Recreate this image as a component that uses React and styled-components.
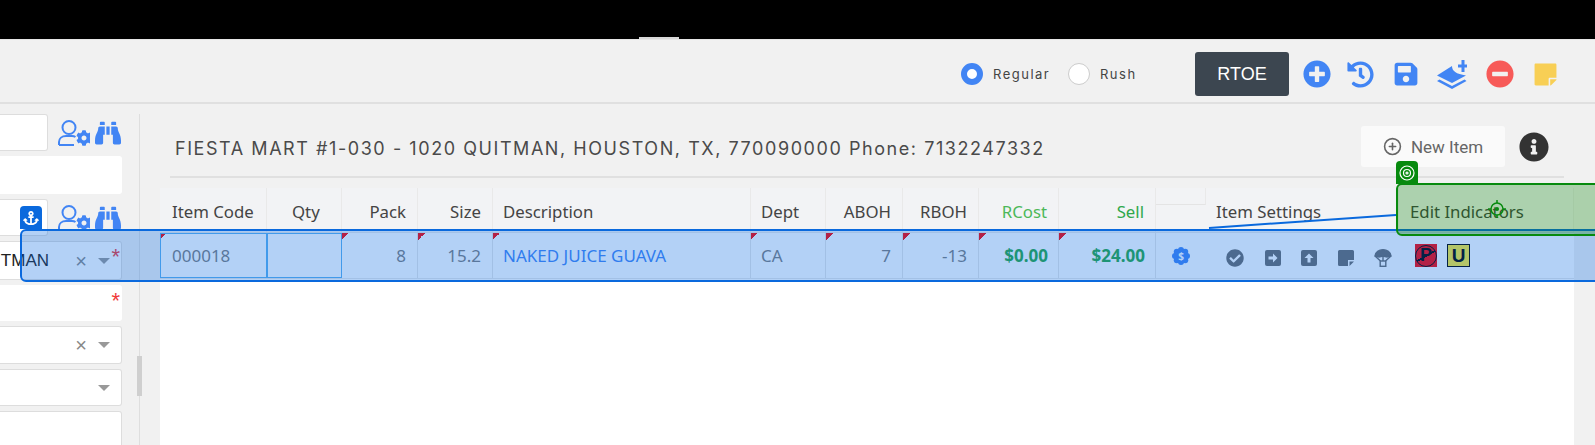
import React from "react";
import styled, { createGlobalStyle } from "styled-components";
import {
  FaPlusCircle,
  FaHistory,
  FaSave,
  FaMinusCircle,
  FaStickyNote,
  FaBinoculars,
  FaAnchor,
  FaCog,
  FaCheckCircle,
  FaInfoCircle,
} from "react-icons/fa";
import { FiPlusCircle } from "react-icons/fi";

const GlobalStyle = createGlobalStyle`
  html, body { margin: 0; padding: 0; background: #f1f1f1; overflow: hidden; }
  * { box-sizing: border-box; }
`;

const Page = styled.div`
  position: relative;
  width: 1595px;
  height: 445px;
  overflow: hidden;
  display: flex;
  flex-direction: column;
  font-family: "Noto Sans", sans-serif;
`;

const TopBar = styled.div`
  height: 39px;
  flex: none;
  background: #000;
  display: flex;
  align-items: flex-end;
  padding-left: 639px;
`;

const TopTab = styled.div`
  width: 40px;
  height: 2px;
  background: #d8d8d8;
`;

const Toolbar = styled.div`
  height: 65px;
  flex: none;
  display: flex;
  align-items: flex-start;
  padding: 12px 0 0 961px;
  background: #f1f1f1;
  border-top: 1px solid #e6e6e6;
  border-bottom: 2px solid #e0e0e0;
`;

const RadioGroup = styled.label`
  display: flex;
  align-items: center;
  width: ${({ $w }) => $w}px;
  flex: none;
  height: 44px;
  font-family: Inter, sans-serif;
  font-size: 13px;
  letter-spacing: 1.5px;
  color: #444;
`;

const Radio = styled.span`
  width: 22px;
  height: 22px;
  border-radius: 50%;
  margin-right: 10px;
  background: #fff;
  border: ${({ $on }) => ($on ? "6px solid #4285f4" : "1px solid #ccc")};
`;

const RtoeButton = styled.button`
  width: 94px;
  height: 44px;
  margin-right: 14px;
  border: none;
  border-radius: 3px;
  background: #3c4650;
  color: #fff;
  font-family: "Liberation Sans", sans-serif;
  font-size: 18px;
`;

const ToolIcon = styled.span`
  display: flex;
  align-items: center;
  justify-content: center;
  width: ${({ $w }) => $w}px;
  height: 44px;
  margin-right: ${({ $gap }) => $gap}px;
  color: ${({ $color }) => $color || "#4285f4"};
`;

const Main = styled.div`
  flex: 1;
  display: flex;
  min-height: 0;
`;

const LeftPanel = styled.div`
  position: relative;
  width: 140px;
  flex: none;
  display: flex;
  flex-direction: column;
  gap: 5px;
  padding-top: 10px;
`;

const Divider = styled.div`
  position: absolute;
  left: 139px;
  top: 10px;
  bottom: 0;
  width: 1px;
  background: #dedede;
`;

const ScrollThumb = styled.div`
  position: absolute;
  left: 137px;
  top: 252px;
  width: 5px;
  height: 40px;
  background: #cfcfcf;
`;

const FormRow = styled.div`
  display: flex;
  flex: none;
  height: ${({ $h }) => $h}px;
  align-items: stretch;
`;

const TextBox = styled.div`
  width: ${({ $short }) => ($short ? 48 : 122)}px;
  background: #fff;
  border: 1px solid ${({ $plain }) => ($plain ? "#fff" : "#ddd")};
  border-left: none;
  border-radius: 0 3px 3px 0;
  display: flex;
  align-items: center;
  justify-content: flex-end;
  overflow: hidden;
  position: relative;
`;

const ValueClip = styled.div`
  width: 49px;
  overflow: hidden;
  display: flex;
  justify-content: flex-end;
  flex: none;
  margin-right: 72px;
  font-family: "Liberation Sans", sans-serif;
  font-size: 17px;
  color: #222;
  white-space: nowrap;
`;

const SelectTools = styled.div`
  display: flex;
  align-items: center;
  position: absolute;
  right: 11px;
  top: 0;
  bottom: 0;
  gap: 11px;
`;

const ClearMark = styled.span`
  font-family: "Liberation Sans", sans-serif;
  font-size: 20px;
  color: #888;
  line-height: 1;
`;

const Caret = styled.span`
  width: 0;
  height: 0;
  border-left: 6px solid transparent;
  border-right: 6px solid transparent;
  border-top: 6px solid #999;
`;

const Required = styled.span`
  position: absolute;
  right: 1px;
  top: ${({ $top }) => $top}px;
  color: #f03a3a;
  font-family: "Liberation Sans", sans-serif;
  font-size: 22px;
  line-height: 1;
`;

const FormIcons = styled.div`
  display: flex;
  align-items: center;
  gap: 5px;
  margin-left: 10px;
  color: #4285f4;
`;

const RightPanel = styled.div`
  flex: 1;
  display: flex;
  flex-direction: column;
  min-width: 0;
  padding-top: 22px;
`;

const TitleBar = styled.div`
  margin-left: 30px;
  width: 1394px;
  height: 52px;
  flex: none;
  display: flex;
  align-items: flex-start;
  padding: 0 15px 0 5px;
  border-bottom: 2px solid #e0e0e0;
`;

const Title = styled.h1`
  flex: 1;
  margin: 0;
  line-height: 45px;
  font-family: Inter, sans-serif;
  font-size: 18px;
  font-weight: 400;
  letter-spacing: 1.56px;
  color: #4a4a4a;
  white-space: nowrap;
`;

const NewItemButton = styled.button`
  width: 144px;
  height: 41px;
  display: flex;
  align-items: center;
  justify-content: center;
  gap: 9px;
  border: none;
  border-radius: 3px;
  background: #fafafa;
  color: #666;
  font-family: Roboto, sans-serif;
  font-size: 17px;
`;

const InfoButton = styled.span`
  display: flex;
  align-items: center;
  justify-content: center;
  height: 41px;
  margin-left: 14px;
  color: #333;
`;

const Table = styled.div`
  flex: 1;
  margin: 10px 21px 0 20px;
  display: flex;
  flex-direction: column;
  background: #fff;
`;

const TableRow = styled.div`
  display: grid;
  grid-template-columns: 107px 75px 76px 75px 258px 75px 77px 76px 80px 97px 50px 193px 175px;
  height: ${({ $h }) => $h}px;
  flex: none;
  background: ${({ $head }) => ($head ? "#f2f3f5" : "#fff")};
  border-bottom: 1px solid #e8e8e8;
`;

const HeadCell = styled.div`
  display: flex;
  align-items: center;
  justify-content: ${({ $right }) => ($right ? "flex-end" : "flex-start")};
  padding: 2px 11px 0 ${({ $pad }) => $pad ?? 11}px;
  border-right: 1px solid #e9e9e9;
  font-size: 16.8px;
  white-space: nowrap;
  color: ${({ $color }) => $color || "#444"};
`;

const SplitCell = styled.div`
  height: 17px;
  border-bottom: 1px solid #e4e4e4;
  border-right: 1px solid #e9e9e9;
`;

const Cell = styled.div`
  display: flex;
  align-items: center;
  justify-content: ${({ $right }) => ($right ? "flex-end" : "flex-start")};
  padding: 0 ${({ $bold }) => ($bold ? 10 : 11)}px 0 ${({ $boxed }) => ($boxed ? 12 : 10)}px;
  font-size: 17px;
  white-space: nowrap;
  border-right: 1px solid ${({ $boxed }) => ($boxed ? "#5ab0f0" : "#e6e6e6")};
  color: ${({ $color }) => $color || "#7d7d7d"};
  font-weight: ${({ $bold }) => ($bold ? 700 : 400)};
  outline: ${({ $boxed }) => ($boxed ? "1px solid #5ab0f0" : "none")};
  outline-offset: -1px;
  background: ${({ $flag }) =>
    $flag ? "linear-gradient(135deg, #ff0000 50%, transparent 50%) no-repeat 0 0 / 7px 7px" : "none"};
`;

const SettingsIcons = styled.div`
  display: flex;
  align-items: center;
  gap: 20.5px;
  padding: 4px 0 0 20px;
  color: #6a6a6a;
`;

const IndicatorCell = styled.div`
  display: flex;
  gap: 10px;
  padding: 11px 0 0 16px;
`;

const BadgeP = styled.span`
  width: 22px;
  height: 23px;
  display: flex;
  align-items: center;
  justify-content: center;
  background: #ff0000;
  font-family: "Liberation Sans", sans-serif;
  font-weight: 700;
  font-size: 18px;
  color: #000;
`;

const BadgePRing = styled.span`
  width: 22px;
  height: 22px;
  display: flex;
  align-items: center;
  justify-content: center;
  border: 1.5px solid #000;
  border-radius: 50%;
  background: linear-gradient(150deg, transparent 47%, #000 47%, #000 53%, transparent 53%);
`;

const BadgeU = styled.span`
  width: 23px;
  height: 23px;
  display: flex;
  align-items: center;
  justify-content: center;
  border: 1px solid #000;
  background: #ffee33;
  font-family: "Liberation Sans", sans-serif;
  font-weight: 700;
  font-size: 19px;
  color: #000;
`;

const DollarBadge = styled.span`
  display: flex;
  align-items: center;
  justify-content: center;
  width: 100%;
  color: #4285f4;
  position: relative;
`;

const DollarMark = styled.span`
  position: absolute;
  color: #fff;
  font-size: 10px;
  font-weight: 700;
`;

const SelectionBox = styled.div`
  position: absolute;
  left: 20px;
  top: 229px;
  width: 1590px;
  height: 53px;
  background: rgba(10, 105, 225, 0.31);
  border: 2px solid #0a69dd;
  border-radius: 6px;
  pointer-events: none;
`;

const AnchorTab = styled.div`
  position: absolute;
  left: 20px;
  top: 206px;
  width: 22px;
  height: 23px;
  display: flex;
  align-items: center;
  justify-content: center;
  border-radius: 4px 4px 0 0;
  background: #0a69dd;
  color: #fff;
`;

const HoverBox = styled.div`
  position: absolute;
  left: 1396px;
  top: 183px;
  width: 210px;
  height: 53px;
  background: rgba(0, 128, 0, 0.29);
  border: 2px solid #078a0e;
  border-radius: 6px;
  pointer-events: none;
`;

const TargetTab = styled.div`
  position: absolute;
  left: 1396px;
  top: 161px;
  width: 22px;
  height: 23px;
  display: flex;
  align-items: center;
  justify-content: center;
  border-radius: 4px 4px 0 0;
  background: #078a0e;
`;

const OverlayArt = styled.svg`
  position: absolute;
  left: 0;
  top: 0;
  pointer-events: none;
`;

const LayerPlus = () => (
  <svg width="30" height="30" viewBox="0 0 30 30" fill="currentColor">
    <path d="M21 5.500h3.500V1h3v4.500H30v3h-2.500v4.500h-3V8.500H21z" />
    <path d="M0 16.500 15 7c0 5 4 8 14 9.500L15 24z" />
    <path d="M2.500 20.500 15 27l12.500-6.500 2 1.500L15 30 0 22z" />
  </svg>
);

const UserCog = () => (
  <svg width="32" height="26" viewBox="0 0 32 26" fill="none" stroke="currentColor" strokeWidth="2">
    <circle cx="11" cy="7.500" r="6.500" />
    <path d="M1 25v-3c0-3.500 3-6 7-6h6c1.500 0 2.500.3 3.500 1M1 25h15" />
    <FaCog x="18" y="10" width="14" height="14" stroke="none" fill="currentColor" />
  </svg>
);

const ArrowSquare = ({ up }) => (
  <svg width="16" height="16" viewBox="0 0 16 16">
    <rect width="16" height="16" rx="2" fill="currentColor" />
    <path
      d="M3.500 6.500h4.500V3.500L12.500 8 8 12.500v-3H3.500z"
      fill="#fff"
      transform={up ? "rotate(-90 8 8)" : undefined}
    />
  </svg>
);

const NoteSquare = () => (
  <svg width="16" height="16" viewBox="0 0 16 16" fill="currentColor">
    <path d="M1.500 0h13A1.500 1.500 0 0 1 16 1.500V10h-6v6H1.500A1.500 1.500 0 0 1 0 14.500v-13A1.500 1.500 0 0 1 1.500 0zM11.500 11.500H16L11.500 16z" />
  </svg>
);

const Parachute = () => (
  <svg width="18" height="18" viewBox="0 0 18 18" fill="none" stroke="currentColor" strokeWidth="1.400">
    <path d="M1 7C1.500 3 5 .8 9 .8s7.500 2.200 8 6.200l-4 1-4-1-4 1z" fill="currentColor" />
    <path d="M1 7l5.500 5M17 7l-5.500 5M9 7v5" />
    <rect x="6.200" y="12" width="5.600" height="5.300" />
  </svg>
);

// round badge with a scalloped rim, the $ sits on top as text
const Scallop = () => (
  <svg width="18" height="18" viewBox="0 0 18 18" fill="currentColor">
    <circle cx="9" cy="9" r="7" />
    {[0, 45, 90, 135, 180, 225, 270, 315].map((deg) => (
      <circle
        key={deg}
        cx={9 + 6 * Math.cos((deg * Math.PI) / 180)}
        cy={9 + 6 * Math.sin((deg * Math.PI) / 180)}
        r="3"
      />
    ))}
  </svg>
);

const columns = [
  ["Item Code", false, 12],
  ["Qty", false, 25],
  ["Pack", true],
  ["Size", true],
  ["Description", false, 10],
  ["Dept", false, 10],
  ["ABOH", true],
  ["RBOH", true],
  ["RCost", true, 11, "#4cb858"],
  ["Sell", true, 11, "#30a84c"],
];

const App = () => {
  return (
    <Page>
      <GlobalStyle />
      <TopBar>
        <TopTab />
      </TopBar>
      <Toolbar>
        <RadioGroup $w={107}>
          <Radio $on />
          Regular
        </RadioGroup>
        <RadioGroup $w={127}>
          <Radio />
          Rush
        </RadioGroup>
        <RtoeButton>RTOE</RtoeButton>
        <ToolIcon $w={28} $gap={15}><FaPlusCircle size={28} /></ToolIcon>
        <ToolIcon $w={28} $gap={19}><FaHistory size={27} /></ToolIcon>
        <ToolIcon $w={26} $gap={18}><FaSave size={26} /></ToolIcon>
        <ToolIcon $w={30} $gap={19}><LayerPlus /></ToolIcon>
        <ToolIcon $w={28} $gap={19} $color="#f75a58"><FaMinusCircle size={28} /></ToolIcon>
        <ToolIcon $w={25} $gap={0} $color="#f8cf55"><FaStickyNote size={25} /></ToolIcon>
      </Toolbar>
      <Main>
        <LeftPanel>
          <Divider />
          <FormRow $h={37}>
            <TextBox $short />
            <FormIcons>
              <UserCog />
              <FaBinoculars size={26} />
            </FormIcons>
          </FormRow>
          <FormRow $h={38}>
            <TextBox $plain />
          </FormRow>
          <FormRow $h={37}>
            <TextBox $short />
            <FormIcons>
              <UserCog />
              <FaBinoculars size={26} />
            </FormIcons>
          </FormRow>
          <FormRow $h={39}>
            <TextBox>
              <ValueClip>QUITMAN</ValueClip>
              <SelectTools>
                <ClearMark>×</ClearMark>
                <Caret />
              </SelectTools>
              <Required $top={4}>*</Required>
            </TextBox>
          </FormRow>
          <FormRow $h={36}>
            <TextBox $plain>
              <Required $top={4}>*</Required>
            </TextBox>
          </FormRow>
          <FormRow $h={38}>
            <TextBox>
              <SelectTools>
                <ClearMark>×</ClearMark>
                <Caret />
              </SelectTools>
            </TextBox>
          </FormRow>
          <FormRow $h={37}>
            <TextBox>
              <SelectTools>
                <Caret />
              </SelectTools>
            </TextBox>
          </FormRow>
          <FormRow $h={40}>
            <TextBox />
          </FormRow>
          <ScrollThumb />
        </LeftPanel>
        <RightPanel>
          <TitleBar>
            <Title>FIESTA MART #1-030 - 1020 QUITMAN, HOUSTON, TX, 770090000 Phone: 7132247332</Title>
            <NewItemButton>
              <FiPlusCircle size={19} />
              New Item
            </NewItemButton>
            <InfoButton><FaInfoCircle size={30} /></InfoButton>
          </TitleBar>
          <Table>
            <TableRow $head $h={45}>
              {columns.map(([label, right, pad, color]) => (
                <HeadCell key={label} $right={right} $pad={pad} $color={color}>{label}</HeadCell>
              ))}
              <SplitCell />
              <HeadCell $pad={10}>Item Settings</HeadCell>
              <HeadCell>Edit Indicators</HeadCell>
            </TableRow>
            <TableRow $h={46}>
              <Cell $flag $boxed>000018</Cell>
              <Cell $boxed />
              <Cell $flag $right>8</Cell>
              <Cell $flag $right>15.2</Cell>
              <Cell $flag $color="#4285f4">NAKED JUICE GUAVA</Cell>
              <Cell $flag>CA</Cell>
              <Cell $flag $right>7</Cell>
              <Cell $flag $right>-13</Cell>
              <Cell $flag $right $bold $color="#28a745">$0.00</Cell>
              <Cell $flag $right $bold $color="#28a745">$24.00</Cell>
              <DollarBadge>
                <Scallop />
                <DollarMark>$</DollarMark>
              </DollarBadge>
              <SettingsIcons>
                <FaCheckCircle size={18} />
                <ArrowSquare />
                <ArrowSquare up />
                <NoteSquare />
                <Parachute />
              </SettingsIcons>
              <IndicatorCell>
                <BadgeP><BadgePRing>P</BadgePRing></BadgeP>
                <BadgeU>U</BadgeU>
              </IndicatorCell>
            </TableRow>
          </Table>
        </RightPanel>
      </Main>
      <SelectionBox />
      <AnchorTab><FaAnchor size={16} /></AnchorTab>
      <HoverBox />
      <TargetTab>
        <svg width="16" height="16" viewBox="0 0 16 16" fill="none" stroke="#fff" strokeWidth="1.200">
          <circle cx="8" cy="8" r="7" />
          <circle cx="8" cy="8" r="3.500" />
          <circle cx="8" cy="8" r="1" />
        </svg>
      </TargetTab>
      <OverlayArt width="1595" height="445" viewBox="0 0 1595 445">
        <path d="M1209 228L1396 215" stroke="#0a69dd" strokeWidth="2" />
        <circle cx="1497" cy="209" r="6" fill="none" stroke="#078a0e" strokeWidth="1.500" />
        <circle cx="1497" cy="209" r="2" fill="#078a0e" />
        <path d="M1497 200v3M1497 215v3M1488 209h3M1503 209h3" stroke="#078a0e" strokeWidth="1.500" />
      </OverlayArt>
    </Page>
  );
};

export default App;
